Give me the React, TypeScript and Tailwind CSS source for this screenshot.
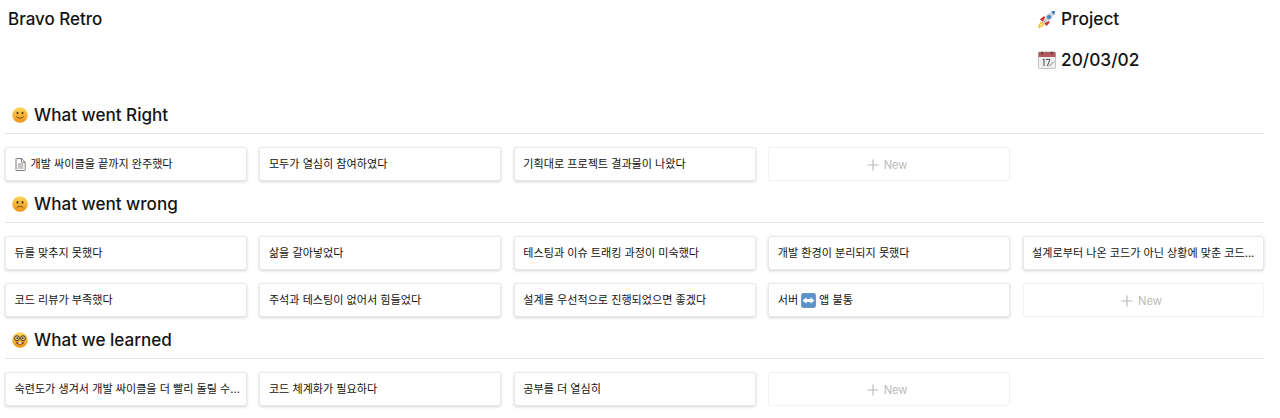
const FONT = "font-['Inter','Noto_Sans_CJK_KR',sans-serif]";

function Smile() {
  return (
    <svg width="16" height="16" viewBox="0 0 16 16" className="shrink-0">
      <defs>
        <linearGradient id="fa" x1="0" y1="0" x2="0" y2="1">
          <stop offset="0" stopColor="#fbd85c" />
          <stop offset="1" stopColor="#f0921a" />
        </linearGradient>
      </defs>
      <circle cx="8" cy="8" r="7.8" fill="url(#fa)" />
      <ellipse cx="5.5" cy="6" rx="1" ry="1.3" fill="#5b3a12" />
      <ellipse cx="10.5" cy="6" rx="1" ry="1.3" fill="#5b3a12" />
      <path d="M4.4 9.6C5.6 11.8 10.4 11.8 11.6 9.6" fill="none" stroke="#6b4413" strokeWidth="0.9" strokeLinecap="round" />
    </svg>
  );
}

function Frown() {
  return (
    <svg width="16" height="16" viewBox="0 0 16 16" className="shrink-0">
      <circle cx="8" cy="8" r="7.8" fill="url(#fa)" />
      <ellipse cx="5.5" cy="6.4" rx="1" ry="1.3" fill="#5b3a12" />
      <ellipse cx="10.5" cy="6.4" rx="1" ry="1.3" fill="#5b3a12" />
      <path d="M5 11.4C6.2 9.8 9.8 9.8 11 11.4" fill="none" stroke="#6b4413" strokeWidth="0.9" strokeLinecap="round" />
    </svg>
  );
}

function Nerd() {
  return (
    <svg width="16" height="16" viewBox="0 0 16 16" className="shrink-0">
      <circle cx="8" cy="8" r="7.8" fill="url(#fa)" />
      <circle cx="5" cy="6.2" r="2.4" fill="#fbe9b0" stroke="#3c2a12" strokeWidth="1" />
      <circle cx="11" cy="6.2" r="2.4" fill="#fbe9b0" stroke="#3c2a12" strokeWidth="1" />
      <circle cx="5.2" cy="6.2" r="0.9" fill="#3c2a12" />
      <circle cx="10.8" cy="6.2" r="0.9" fill="#3c2a12" />
      <path d="M3.8 10C5.4 10.6 10.6 10.6 12.2 10C11.6 13.6 4.4 13.6 3.8 10Z" fill="#7a3a16" />
      <rect x="6.4" y="10.3" width="3.2" height="1.5" fill="#fff" />
    </svg>
  );
}

function Rocket() {
  return (
    <svg width="19" height="19" viewBox="0 0 19 19" className="shrink-0">
      <path d="M1 18C1.5 14.5 3 12.5 5 11.5L7.5 14C6.5 16 4.5 17.5 1 18Z" fill="#f7b21c" />
      <path d="M2.8 16.2C3.1 14.6 3.8 13.6 5 13L6 14C5.4 15.2 4.4 15.9 2.8 16.2Z" fill="#fdf0a0" />
      <path d="M3 9.5L7 6L8.5 8.5L5.5 11.5Z" fill="#d9281e" />
      <path d="M9.5 16L13 12L10.5 10.5L7.5 13.5Z" fill="#d9281e" />
      <path d="M6 11C8 6 12 2 18 1C17 7 13 11 8 13Z" fill="#cfd8e2" />
      <path d="M14 1.6C15.2 1.3 16.6 1.1 18 1C17.8 2.4 17.5 3.8 17.2 5Z" fill="#2f6fc4" />
      <circle cx="12" cy="7" r="1.8" fill="#3f88d8" stroke="#5f7186" strokeWidth="0.7" />
      <path d="M6 11L8 13L8.8 12.4L6.7 10.2Z" fill="#7b8794" />
    </svg>
  );
}

function Calendar() {
  return (
    <svg width="18" height="18" viewBox="0 0 18 18" className="shrink-0 ml-px">
      <rect x="0.5" y="1" width="17" height="16.5" rx="1.2" fill="#efeff0" stroke="#9f9fa3" strokeWidth="0.6" />
      <path d="M0.5 2.2A1.2 1.2 0 0 1 1.7 1H16.3A1.2 1.2 0 0 1 17.5 2.2V6H0.5Z" fill="#b4565a" />
      <rect x="3.5" y="0.5" width="1.2" height="3" rx="0.6" fill="#3a3a3c" />
      <rect x="13.3" y="0.5" width="1.2" height="3" rx="0.6" fill="#3a3a3c" />
      <path d="M4.6 8.6L6 8V15" fill="none" stroke="#4a4a4c" strokeWidth="1" />
      <path d="M8 8.4H12L9.4 15" fill="none" stroke="#4a4a4c" strokeWidth="1" />
      <path d="M11 15.5L16 10.5" stroke="#7f7f83" strokeWidth="1" />
    </svg>
  );
}

function DocIcon() {
  return (
    <svg width="11" height="13" viewBox="0 0 11 13" className="shrink-0" fill="none" stroke="#6f6e69" strokeWidth="0.9">
      <path d="M1 1.1A.6.6 0 0 1 1.6.5H6.6L10.2 4.1V11.9A.6.6 0 0 1 9.6 12.5H1.6A.6.6 0 0 1 1 11.9Z" fill="#fff" />
      <path d="M6.5.7V4.2H10" />
      <path d="M2.8 6H8.4M2.8 8H8.4M2.8 10H8.4" strokeWidth="0.8" />
    </svg>
  );
}

function LeftRight() {
  return (
    <svg width="15" height="15" viewBox="0 0 15 15" className="shrink-0 mx-[3px]">
      <rect x="0.3" y="0.3" width="14.4" height="14.4" rx="2.4" fill="#5b93c9" stroke="#4479ad" strokeWidth="0.5" />
      <path d="M1.6 7.5L5.4 4.2V6.1H9.6V4.2L13.4 7.5L9.6 10.8V8.9H5.4V10.8Z" fill="#fff" />
    </svg>
  );
}

function Card({ children }: { children: React.ReactNode }) {
  return (
    <div className="h-[34px] flex items-center pl-[8.5px] pr-[2px] bg-white rounded-[3px] border border-[#e9e9e8] shadow-[0_1px_3px_rgba(15,15,15,0.18)]">
      <div className="flex items-center pt-[1px] text-[11.1px] text-[#141412] whitespace-nowrap">{children}</div>
    </div>
  );
}

function NewCard() {
  return (
    <div className="h-[34px] flex items-center justify-center gap-[5px] pr-[4px] pt-[2px] rounded-[3px] border border-[#f1f1f0] text-[11.2px] text-[#bdbcb9]">
      <svg width="12" height="12" viewBox="0 0 12 12" className="shrink-0">
        <path d="M6 .5V11.5M.5 6H11.5" stroke="#b8b7b4" strokeWidth="1.1" />
      </svg>
      <span>New</span>
    </div>
  );
}

function Section({ icon, title, className, children }: { icon: React.ReactNode; title: string; className: string; children: React.ReactNode }) {
  return (
    <section className={className}>
      <div className="h-[24px] flex items-center gap-[6px] pl-[7px] pt-[2px]">
        {icon}
        <h2 className="text-[17.1px] font-medium text-[#141412] leading-[22px]">{title}</h2>
      </div>
      <div className="mt-[7px] h-px bg-[#e3e3e2]" />
      <div className="mt-[13px] grid grid-cols-5 gap-x-[12.6px] gap-y-[13px]">{children}</div>
    </section>
  );
}

export default function App() {
  return (
    <div className={`w-[1280px] h-[418px] overflow-hidden bg-white ${FONT}`}>
      <div className="ml-[5px] w-[1259.4px]">
        <header className="flex h-[102px] pt-[8px]">
          <h1 className="ml-[3px] text-[17px] font-medium leading-[22px] text-[#141412]">Bravo Retro</h1>
          <div className="ml-auto w-[227.4px] flex flex-col gap-[19px]">
            <div className="flex items-center gap-[5px] h-[22px] text-[17.3px] font-medium text-[#141412]">
              <Rocket />
              <span>Project</span>
            </div>
            <div className="flex items-center gap-[5px] h-[22px] text-[17.3px] font-medium text-[#141412]">
              <Calendar />
              <span>20/03/02</span>
            </div>
          </div>
        </header>
        <Section icon={<Smile />} title="What went Right" className="">
          <Card>
            <span className="mr-[5px] flex"><DocIcon /></span>
            개발 싸이클을 끝까지 완주했다
          </Card>
          <Card>모두가 열심히 참여하였다</Card>
          <Card>기획대로 프로젝트 결과물이 나왔다</Card>
          <NewCard />
        </Section>
        <Section icon={<Frown />} title="What went wrong" className="mt-[10px]">
          <Card>듀를 맞추지 못했다</Card>
          <Card>삶을 갈아넣었다</Card>
          <Card>테스팅과 이슈 트래킹 과정이 미숙했다</Card>
          <Card>개발 환경이 분리되지 못했다</Card>
          <Card>설계로부터 나온 코드가 아닌 상황에 맞춘 코드...</Card>
          <Card>코드 리뷰가 부족했다</Card>
          <Card>주석과 테스팅이 없어서 힘들었다</Card>
          <Card>설계를 우선적으로 진행되었으면 좋겠다</Card>
          <Card>
            서버
            <LeftRight />
            앱 불통
          </Card>
          <NewCard />
        </Section>
        <Section icon={<Nerd />} title="What we learned" className="mt-[10px]">
          <Card>숙련도가 생겨서 개발 싸이클을 더 빨리 돌릴 수...</Card>
          <Card>코드 체계화가 필요하다</Card>
          <Card>공부를 더 열심히</Card>
          <NewCard />
        </Section>
      </div>
    </div>
  );
}
